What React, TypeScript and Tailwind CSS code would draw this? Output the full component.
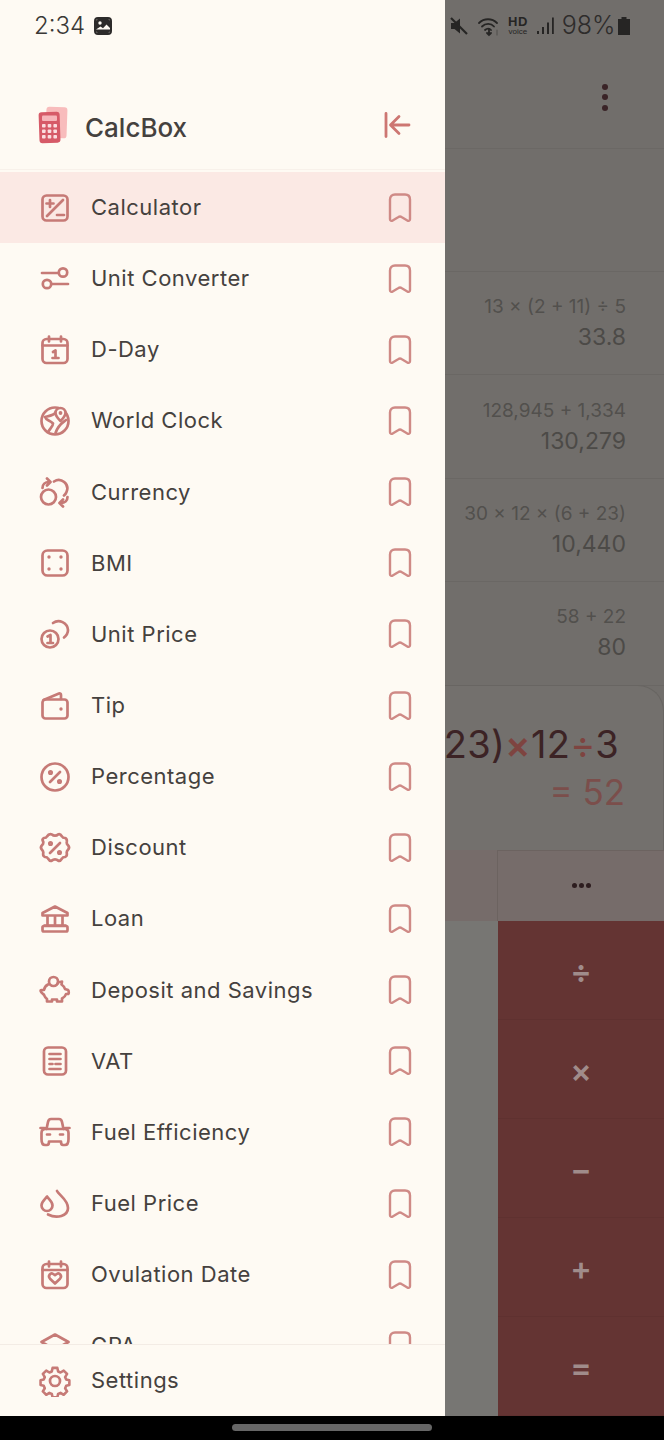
import React from "react";

const C = "#c67a76";

function I({ children, className = "" }: { children: React.ReactNode; className?: string }) {
  return (
    <svg viewBox="0 0 32 32" className={`w-8 h-8 shrink-0 ${className}`} fill="none" stroke={C} strokeWidth={2.7} strokeLinecap="round" strokeLinejoin="round">
      {children}
    </svg>
  );
}

const icons: Record<string, React.ReactNode> = {
  Calculator: (
    <I>
      <rect x="3.5" y="3.5" width="25" height="25" rx="4" />
      <path d="M24 8 8 24M11 8v7M7.5 11.5h7M18 23h7" />
    </I>
  ),
  "Unit Converter": (
    <I>
      <path d="M3 10h16M13 21h16" />
      <circle cx="24" cy="9.5" r="4.2" />
      <circle cx="8" cy="21" r="4.2" />
    </I>
  ),
  "D-Day": (
    <I>
      <rect x="3.5" y="5" width="25" height="24" rx="4" />
      <path d="M10 2.5v5M22 2.500v5M3.500 11.500h25M14 18l2.500-1.500V24M13.500 24h6" />
    </I>
  ),
  "World Clock": (
    <I>
      <circle cx="16" cy="16" r="13.500" />
      <path d="M17 7c-2 3.500-7 4-11 5 1 3.500 5 3 8 6.500 0 3-3 5-4.500 8M27 15c-4 3-8 5-10.500 13" />
      <path d="M16.500 8a5 5 0 0 1 10 0c0 3-3 6-5 8-2-2-5-5-5-8Z" fill="#fefaf3" />
      <circle cx="21.500" cy="8" r="1" strokeWidth="1.800" />
    </I>
  ),
  Currency: (
    <I>
      <circle cx="9.500" cy="21" r="7.500" />
      <path d="M15 5.500A8.500 8.500 0 0 1 27.500 16c-.5 1.500-1.300 2.500-2.500 3.500M3.500 12c0-3.500 2.500-6 6.500-6M8 2.500 11.500 6 8 9.500M28.500 21c0 3.500-2.500 6-6.500 6M24 30.500 20.500 27l3.500-3.500" />
    </I>
  ),
  BMI: (
    <I>
      <rect x="3.500" y="3.500" width="25" height="25" rx="5" />
      <circle cx="10" cy="10" r=".8" strokeWidth="1.800" />
      <circle cx="22" cy="10" r=".8" strokeWidth="1.800" />
      <circle cx="10" cy="22" r=".8" strokeWidth="1.800" />
      <circle cx="22" cy="22" r=".8" strokeWidth="1.800" />
    </I>
  ),
  "Unit Price": (
    <I>
      <circle cx="11" cy="21" r="8.500" />
      <path d="M14 5A9.500 9.500 0 0 1 29 12c0 3-1 5-4 7.500M8.500 18.500 11.500 17v8M8.500 25h5.500" />
    </I>
  ),
  Tip: (
    <I>
      <path d="M4.500 10 20 3.500c1-.4 2 .3 2 1.500v4" />
      <rect x="3.500" y="9.500" width="25" height="19" rx="3" />
      <circle cx="22" cy="19" r=".8" strokeWidth="1.800" />
    </I>
  ),
  Percentage: (
    <I>
      <circle cx="16" cy="16" r="13.500" />
      <path d="M21 11 11 21" />
      <circle cx="11.500" cy="11.500" r="1.200" />
      <circle cx="20.500" cy="20.500" r="1.200" />
    </I>
  ),
  Discount: (
    <I>
      <path d="M13 2.500c1.500 1.500 4.500 1.500 6 0 1.500-.8 3 .3 4 2 .5 1 1.500 1.500 3 1.500 1.500.5 2 2 1.800 3.500-.3 1.500 0 2.500 1 3.500 1.500 1.500 1.500 3.500 0 5-1 1-1.300 2-1 3.500.2 1.500-.3 3-1.800 3.500-1.500 0-2.500.5-3 1.500-1 1.700-2.500 2.800-4 2-1.500-1.500-4.500-1.500-6 0-1.500.8-3-.3-4-2-.5-1-1.500-1.500-3-1.500-1.500-.5-2-2-1.800-3.500.3-1.500 0-2.500-1-3.500-1.500-1.500-1.500-3.500 0-5 1-1 1.300-2 1-3.500C3 8 3.500 6.500 5 6c1.500 0 2.500-.5 3-1.500 1-1.700 2.500-2.800 5-2Z" />
      <path d="M21 11 11 21" />
      <circle cx="11.500" cy="11.500" r="1.200" />
      <circle cx="20.500" cy="20.500" r="1.200" />
    </I>
  ),
  Loan: (
    <I>
      <path d="M3.500 12.500V10L16 3.500 28.500 10v2.500ZM8.500 12.500v10M16 12.500v10M23.500 12.500v10M5.500 22.500h21" />
      <rect x="3.500" y="23" width="25" height="5.500" rx="1.500" />
    </I>
  ),
  "Deposit and Savings": (
    <I>
      <circle cx="14.500" cy="7.500" r="4.500" />
      <path d="M9 10.500c-2 1-3.500 3-4 5.500H2.500c-1.500 0-1 2 1 3.500 1 .8 1.500 1 1.800 2 .4 1.500 1.400 2.500 2.700 3.500v2.500h5v-2h5v2h5v-3c2-1 3.500-2.500 4-4.500h2c1 0 1-3.500 0-4-1-.5-2-.5-3-1-.5-2-2-3.500-3.500-4.500l.5-3c-2 0-3.500.5-4.500 2" />
    </I>
  ),
  VAT: (
    <I>
      <rect x="5" y="2.500" width="22" height="27" rx="4" />
      <path d="M10.500 9h11M10.500 14h11M10.500 19h3M16.500 19h5M10.500 24h11" />
    </I>
  ),
  "Fuel Efficiency": (
    <I>
      <path d="M7.500 13l1.500-7c.3-1.500 1.500-3 3-3h8c1.500 0 2.700 1.500 3 3l1.500 7M1.500 12h4M26.500 12h4" />
      <path d="M2.500 23v-6c0-2.500 1.500-4 4-4h19c2.500 0 4 1.500 4 4v6c0 2.500-.8 6-3.500 6h-2c-1.500 0-2-1.500-2-3.500h-12c0 2-.5 3.500-2 3.500H6c-2.700 0-3.500-3.500-3.500-6Z" />
      <path d="M8 18.500h3M21 18.500h3" />
    </I>
  ),
  "Fuel Price": (
    <I>
      <path d="M8 8.500c-2 3-5.500 5-5.500 9a5.500 5.500 0 0 0 11 0c0-4-3.500-6-5.500-9Z" />
      <path d="M18 3c2 4 11 9 11 17 0 8-11 11-20 6.500" />
    </I>
  ),
  "Ovulation Date": (
    <I>
      <rect x="3.500" y="5" width="25" height="24" rx="4" />
      <path d="M10 2.500v5M22 2.500v5M3.500 11h25" />
      <path d="M16 24.500l-5-4.800c-2.500-2.700.5-6.500 3.200-4.700l1.800 1.200 1.800-1.200c2.700-1.800 5.700 2 3.200 4.700Z" />
    </I>
  ),
  GPA: (
    <I>
      <path d="M2.500 12 16 4.500 29.500 12 16 19.500ZM7.500 15v9c4 4.500 13 4.500 17 0v-9" />
    </I>
  ),
};

const items = Object.keys(icons);

function Bookmark() {
  return (
    <svg viewBox="0 0 24 30" className="w-6 h-[30px] shrink-0" fill="none" stroke="#cf8a86" strokeWidth={2.4} strokeLinejoin="round">
      <path d="M2 6.500C2 3.500 4 1.500 7 1.500h10c3 0 5 2 5 5v19.800c0 1.500-1.500 2-2.700 1.200L13.500 24c-1-.7-2-.7-3 0l-5.800 3.500C3.500 28.300 2 27.800 2 26.300Z" />
    </svg>
  );
}

function Row({ label, active }: { label: string; active?: boolean }) {
  return (
    <div className={`h-[71.15px] shrink-0 flex items-center pl-[39px] pr-[33px] ${active ? "bg-[#fbe9e4]" : ""}`}>
      {icons[label]}
      <span className="ml-5 flex-1 text-[22px] tracking-[0.5px] text-[#45413e]">{label}</span>
      <Bookmark />
    </div>
  );
}

function Logo() {
  return (
    <svg viewBox="0 0 30 38" className="w-[30px] h-[38px] shrink-0 mb-[4px]">
      <rect x="8" y="1" width="21" height="31" rx="3" fill="#f8bcbc" transform="rotate(2 18 16)" />
      <rect x="1" y="6" width="21" height="31" rx="3" fill="#d65a68" transform="rotate(-2 11 20)" />
      <rect x="4" y="9.500" width="15" height="5.500" rx="1" fill="#f6b5ba" />
      <g fill="#fbdde0">
        <rect x="4" y="18" width="3.600" height="3.600" rx=".8" />
        <rect x="9.700" y="18" width="3.600" height="3.600" rx=".8" />
        <rect x="15.400" y="18" width="3.600" height="3.600" rx=".8" />
        <rect x="4" y="23.500" width="3.600" height="3.600" rx=".8" />
        <rect x="9.700" y="23.500" width="3.600" height="3.600" rx=".8" />
        <rect x="15.400" y="23.500" width="3.600" height="3.600" rx=".8" />
        <rect x="4" y="29" width="3.600" height="3.600" rx=".8" />
        <rect x="9.700" y="29" width="3.600" height="3.600" rx=".8" />
        <rect x="15.400" y="29" width="3.600" height="3.600" rx=".8" />
      </g>
    </svg>
  );
}

function Drawer() {
  return (
    <aside className="w-[445px] h-full shrink-0 bg-[#fefaf3] flex flex-col">
      <div className="h-[52px] shrink-0 flex items-center pl-[34px] gap-[8px] text-[#3a3836]">
        <span className="text-[24px] font-light">2:34</span>
        <svg viewBox="0 0 20 20" className="w-5 h-5" fill="none">
          <rect x="2" y="2" width="16" height="16" rx="3" fill="#fefaf3" stroke="#2d2b2a" strokeWidth="2" />
          <rect x="3" y="3" width="14" height="14" rx="2" fill="#2d2b2a" />
          <circle cx="7" cy="7" r="1.700" fill="#fefaf3" />
          <path d="M3 13.500 7.500 10.500l2.500 1.700 3.500-3.700 3.500 3.500v1.500Z" fill="#fefaf3" />
        </svg>
      </div>
      <div className="h-[118px] shrink-0 flex items-center pl-[38px] pr-[33px] pt-[41px] pb-[8px] border-b border-[#f8f1ea]">
        <Logo />
        <span className="ml-[17px] flex-1 text-[26px] font-medium text-[#45413e]">CalcBox</span>
        <svg viewBox="0 0 30 30" className="w-[30px] h-[30px] mb-[4px]" fill="none" stroke="#cd7672" strokeWidth={2.800} strokeLinecap="round" strokeLinejoin="round">
          <path d="M4 3.500v23M27 15H9.500M17 6.500 8.500 15l8.500 8.500" />
        </svg>
      </div>
      <div className="flex-1 overflow-hidden flex flex-col pt-[2px]">
        {items.map((l, i) => (
          <Row key={l} label={l} active={i === 0} />
        ))}
      </div>
      <div className="h-[72px] shrink-0 border-t border-[#f3ece5] flex items-center pl-[39px]">
        <svg viewBox="0 0 32 32" className="w-8 h-8" fill="none" stroke={C} strokeWidth={2.700} strokeLinejoin="round">
          <path d="M13.500 2.500h5l.8 3.700 2.500 1.100 3.300-2 3.500 3.500-2 3.300 1.100 2.500 3.300.8v5l-3.300.8-1.100 2.500 2 3.300-3.500 3.500-3.300-2-2.500 1.100-.8 3.400h-5l-.8-3.400-2.500-1.100-3.300 2-3.500-3.500 2-3.300-1.100-2.500-3.300-.8v-5l3.300-.8 1.100-2.500-2-3.300 3.500-3.500 3.300 2 2.500-1.100Z" transform="translate(.6 .5) scale(.96)" />
          <circle cx="16" cy="16" r="5" />
        </svg>
        <span className="ml-5 text-[22px] tracking-[0.5px] text-[#45413e]">Settings</span>
      </div>
    </aside>
  );
}

function History({ expr, res }: { expr: string; res: string }) {
  return (
    <div className="h-[103.4px] shrink-0 border-b border-[#6a6764] flex flex-col items-end justify-center pr-[38px] pb-[2px]">
      <span className="text-[19px] leading-[30px] text-[#52504d]">{expr}</span>
      <span className="text-[23px] leading-[30px] text-[#4c4a47]">{res}</span>
    </div>
  );
}

function OpKey({ children }: { children: React.ReactNode }) {
  return (
    <div className="flex-1 flex items-center justify-center border-b border-[#5f3130] pt-[4px] text-[32px] leading-none font-semibold text-[#a08c8b]">
      {children}
    </div>
  );
}

function Background() {
  return (
    <main className="flex-1 min-w-0 h-full bg-[#716e6b] flex flex-col overflow-hidden">
      <div className="h-[52px] shrink-0 flex items-center text-[#2e2c2b]">
        <svg viewBox="0 0 20 20" className="w-5 h-5 ml-1" fill="#262524">
          <path d="M2 7h3.500L11 2.500v15L5.500 13H2Z" />
          <path d="M2 2l16 16" stroke="#262524" strokeWidth="2.200" />
        </svg>
        <svg viewBox="0 0 24 22" className="w-6 h-[22px] ml-[8px]" fill="none" stroke="#262524" strokeWidth="1.800" strokeLinecap="round">
          <path d="M2 8c5-5 13-5 18 0M5 11.500c3.500-3.500 9-3.500 12 0M8 15c2-1.800 4.500-1.800 6 0" />
          <path d="M12 14v6M10 18l2 2 2-2" />
          <path d="M20 20v-5" stroke="#55524f" strokeWidth="1.200" />
        </svg>
        <div className="ml-[7px] flex flex-col items-center font-['Liberation_Sans',sans-serif] text-[#262524]">
          <span className="text-[13px] font-bold leading-[12px] tracking-[0.5px]">HD</span>
          <span className="text-[8px] font-medium leading-[8px]">voice</span>
        </div>
        <svg viewBox="0 0 20 20" className="w-5 h-5 ml-[8px]" fill="#262524">
          <rect x="1" y="15" width="2" height="3" />
          <rect x="6" y="11" width="2" height="7" />
          <rect x="11" y="6.500" width="2" height="11.500" />
          <rect x="16" y="1.500" width="1.800" height="16.500" />
        </svg>
        <span className="ml-[6px] text-[25px] font-light text-[#2e2c2b]">98%</span>
        <svg viewBox="0 0 14 20" className="w-[14px] h-5 ml-[1px]" fill="#262524">
          <path d="M4.500 1h5v2H13v16H1V3h3.500Z" />
        </svg>
      </div>
      <div className="h-[97px] shrink-0 border-b border-[#6b6865] flex items-center justify-end pr-[56px] pb-[6px]">
        <div className="flex flex-col gap-[4.500px]">
          <span className="w-[6px] h-[6px] rounded-full bg-[#3a2427]" />
          <span className="w-[6px] h-[6px] rounded-full bg-[#3a2427]" />
          <span className="w-[6px] h-[6px] rounded-full bg-[#3a2427]" />
        </div>
      </div>
      <div className="h-[123px] shrink-0 border-b border-[#6a6764]" />
      <History expr="13 × (2 + 11) ÷ 5" res="33.8" />
      <History expr="128,945 + 1,334" res="130,279" />
      <History expr="30 × 12 × (6 + 23)" res="10,440" />
      <History expr="58 + 22" res="80" />
      <div className="h-[165px] shrink-0 -mt-px rounded-tr-[26px] border-t border-r border-[#686562] bg-[#73706d] flex flex-col items-end pr-[44px] pt-[33px] overflow-hidden">
        <div className="text-[38px] leading-[50px] whitespace-nowrap text-[#3c2325] tracking-[0.3px]">
          23)<span className="font-semibold text-[#7e4440]">×</span>12<span className="text-[#7e4440]">÷</span>3
        </div>
        <div className="-mr-[6px] -mt-[1px] text-[35px] leading-[48px] text-[#7b4e4b]">= 52</div>
      </div>
      <div className="h-[71px] shrink-0 flex bg-[#766c6a]">
        <div className="w-[53px] border-r border-[#6c6360]" />
        <div className="flex-1 flex items-center justify-center gap-[2px] border-t border-[#6c6360]">
          <span className="w-[5px] h-[5px] rounded-full bg-[#2d1d1f]" />
          <span className="w-[5px] h-[5px] rounded-full bg-[#2d1d1f]" />
          <span className="w-[5px] h-[5px] rounded-full bg-[#2d1d1f]" />
        </div>
      </div>
      <div className="flex-1 flex min-h-0">
        <div className="w-[53px] bg-[#777673]" />
        <div className="flex-1 bg-[#643433] flex flex-col">
          <OpKey>÷</OpKey>
          <OpKey>×</OpKey>
          <OpKey>−</OpKey>
          <OpKey>+</OpKey>
          <OpKey>=</OpKey>
        </div>
      </div>
    </main>
  );
}

export default function App() {
  return (
    <div className="w-[664px] h-[1440px] flex flex-col overflow-hidden font-['Inter',sans-serif]">
      <div className="h-[1416px] shrink-0 flex">
        <Drawer />
        <Background />
      </div>
      <div className="flex-1 bg-black flex justify-center pt-[8px]">
        <div className="w-[200px] h-[7px] rounded-full bg-[#666666]" />
      </div>
    </div>
  );
}
